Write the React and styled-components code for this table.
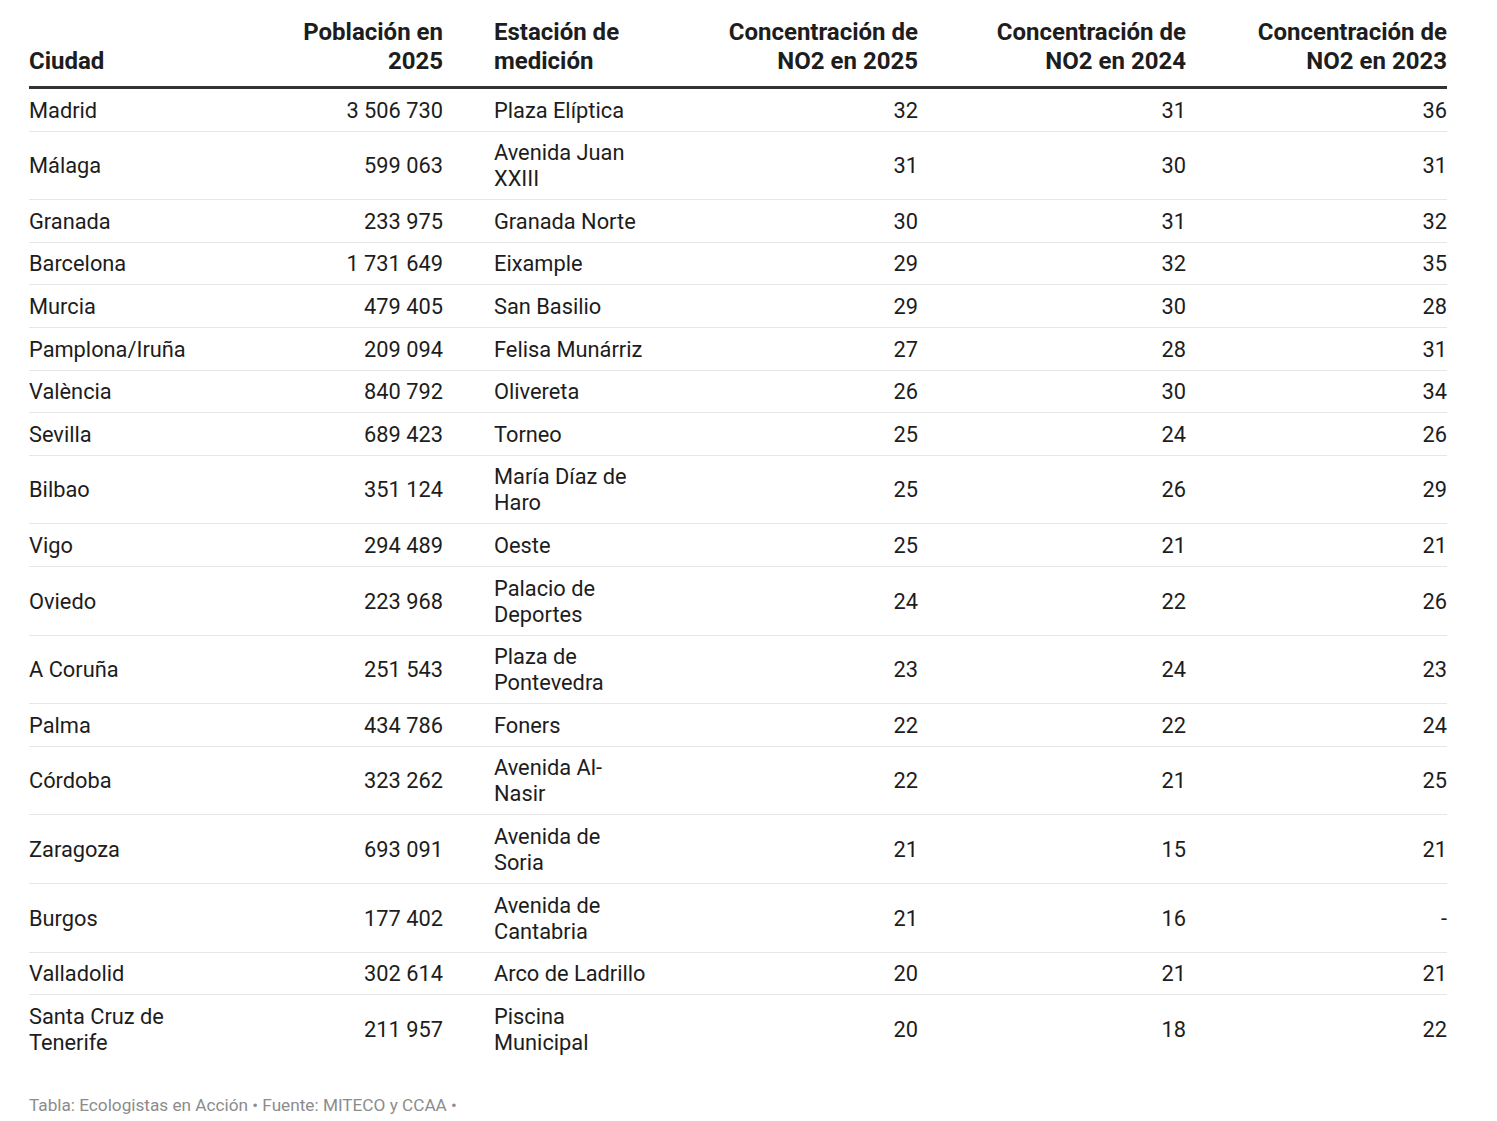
import React from "react";
import styled, { createGlobalStyle } from "styled-components";

const GlobalStyle = createGlobalStyle`
  body {
    margin: 0;
    background: #ffffff;
    font-family: Roboto, "Noto Sans", Arial, sans-serif;
    color: #1d1d1d;
  }
`;

const Page = styled.div`
  padding: 18px 50px 0 29px;
`;

const Table = styled.table`
  width: 1418px;
  border-collapse: collapse;
  table-layout: fixed;
`;

const HeadCell = styled.th`
  font-size: 24px;
  line-height: 29px;
  font-weight: 700;
  color: #1d1d1d;
  vertical-align: bottom;
  text-align: ${(p) => (p.$right ? "right" : "left")};
  padding: 0 0 10px ${(p) => p.$pl || 0}px;
  border-bottom: 3px solid #333333;
`;

const Row = styled.tr`
  border-bottom: 1px solid #e6e6e6;
  &:last-child {
    border-bottom: none;
  }
`;

const Cell = styled.td`
  font-size: 21.8px;
  line-height: 26px;
  font-weight: 400;
  color: #1d1d1d;
  vertical-align: middle;
  text-align: ${(p) => (p.$right ? "right" : "left")};
  padding: 8.6px 0 7px ${(p) => p.$pl || 0}px;
`;

const Footer = styled.div`
  margin-top: 32px;
  font-size: 17.2px;
  line-height: 21px;
  color: #8c8c8c;
`;

const columns = [
  { label: "Ciudad", width: 200, right: false, pl: 0 },
  { label: "Población en 2025", width: 214, right: true, pl: 40 },
  { label: "Estación de medición", width: 206, right: false, pl: 51 },
  { label: "Concentración de NO2 en 2025", width: 269, right: true, pl: 50 },
  { label: "Concentración de NO2 en 2024", width: 268, right: true, pl: 50 },
  { label: "Concentración de NO2 en 2023", width: 261, right: true, pl: 50 },
];

const rows = [
  ["Madrid", "3 506 730", "Plaza Elíptica", "32", "31", "36"],
  ["Málaga", "599 063", "Avenida Juan XXIII", "31", "30", "31"],
  ["Granada", "233 975", "Granada Norte", "30", "31", "32"],
  ["Barcelona", "1 731 649", "Eixample", "29", "32", "35"],
  ["Murcia", "479 405", "San Basilio", "29", "30", "28"],
  ["Pamplona/Iruña", "209 094", "Felisa Munárriz", "27", "28", "31"],
  ["València", "840 792", "Olivereta", "26", "30", "34"],
  ["Sevilla", "689 423", "Torneo", "25", "24", "26"],
  ["Bilbao", "351 124", "María Díaz de Haro", "25", "26", "29"],
  ["Vigo", "294 489", "Oeste", "25", "21", "21"],
  ["Oviedo", "223 968", "Palacio de Deportes", "24", "22", "26"],
  ["A Coruña", "251 543", "Plaza de Pontevedra", "23", "24", "23"],
  ["Palma", "434 786", "Foners", "22", "22", "24"],
  ["Córdoba", "323 262", "Avenida Al-Nasir", "22", "21", "25"],
  ["Zaragoza", "693 091", "Avenida de Soria", "21", "15", "21"],
  ["Burgos", "177 402", "Avenida de Cantabria", "21", "16", "-"],
  ["Valladolid", "302 614", "Arco de Ladrillo", "20", "21", "21"],
  ["Santa Cruz de Tenerife", "211 957", "Piscina Municipal", "20", "18", "22"],
];

const App = () => {
  return (
    <Page>
      <GlobalStyle />
      <Table>
        <colgroup>
          {columns.map((c) => (
            <col key={c.label} style={{ width: c.width }} />
          ))}
        </colgroup>
        <thead>
          <tr>
            {columns.map((c) => (
              <HeadCell key={c.label} $right={c.right} $pl={c.pl}>
                {c.label}
              </HeadCell>
            ))}
          </tr>
        </thead>
        <tbody>
          {rows.map((r) => (
            <Row key={r[0]}>
              {r.map((v, i) => (
                <Cell key={i} $right={columns[i].right} $pl={columns[i].pl}>
                  {v}
                </Cell>
              ))}
            </Row>
          ))}
        </tbody>
      </Table>
      <Footer>Tabla: Ecologistas en Acción • Fuente: MITECO y CCAA •</Footer>
    </Page>
  );
};

export default App;
